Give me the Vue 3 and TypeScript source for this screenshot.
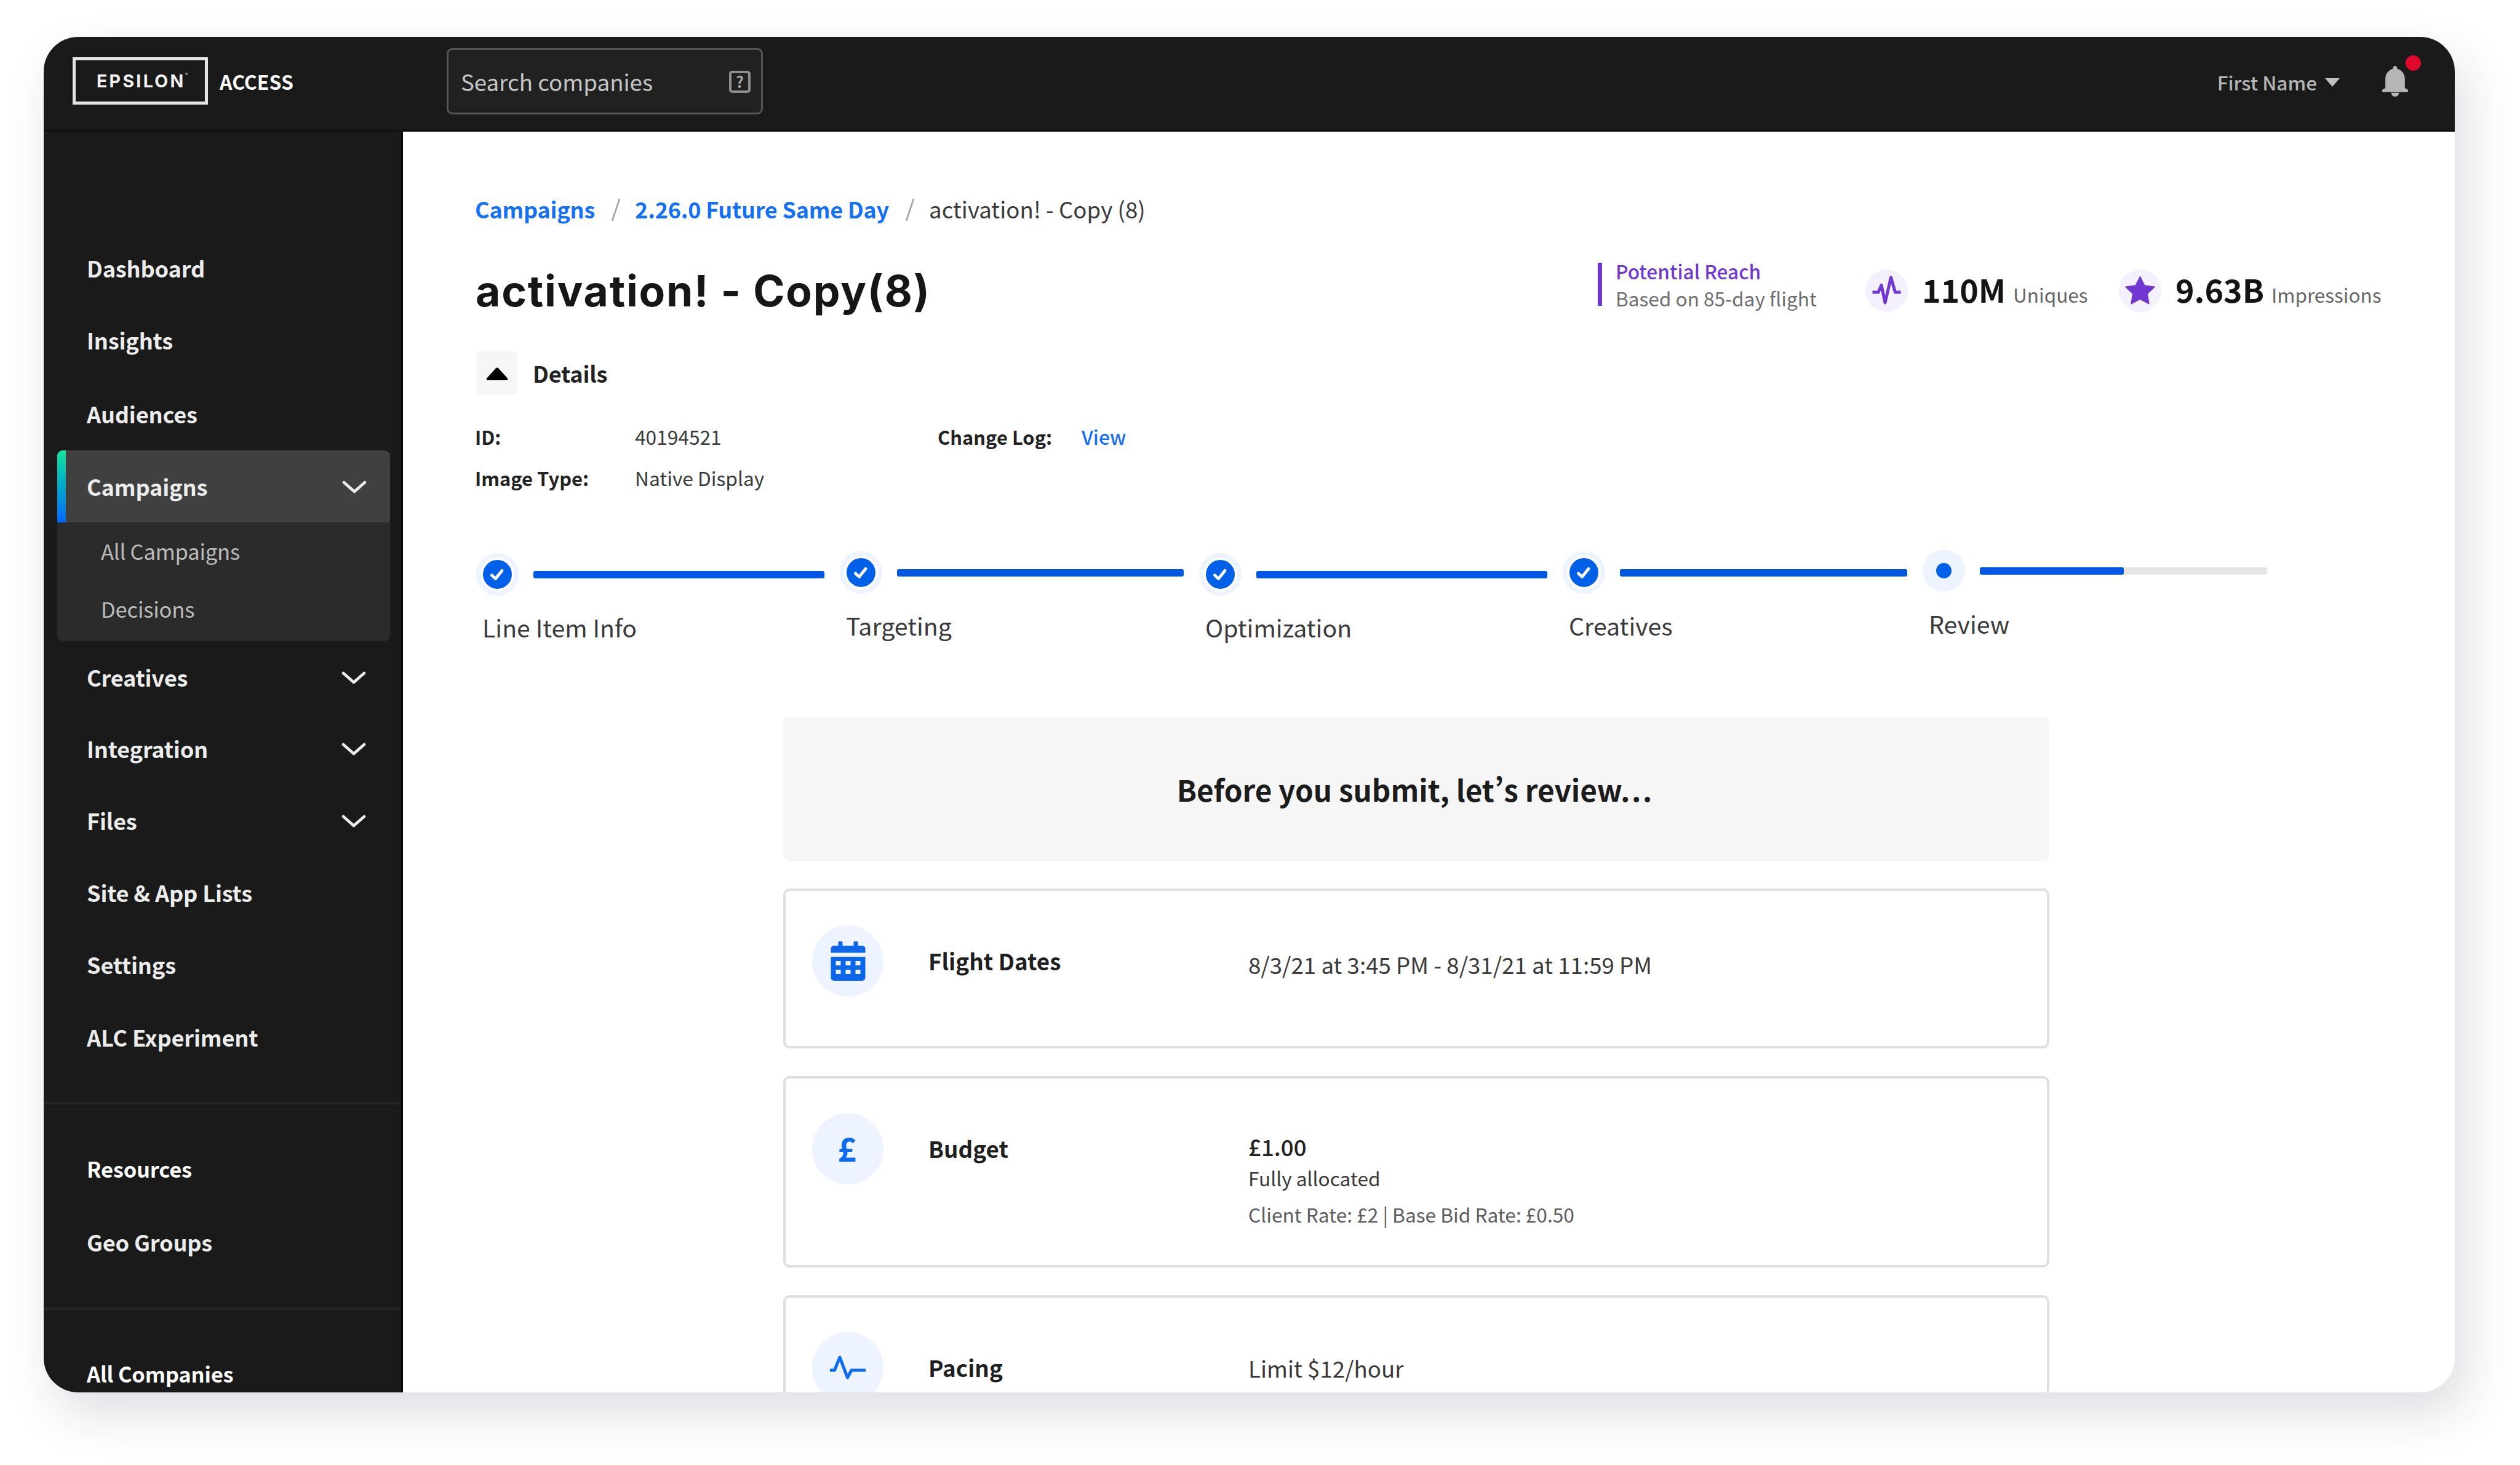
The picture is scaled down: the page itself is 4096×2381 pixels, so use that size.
<script setup lang="ts">
interface NavItem {
  label: string
  height: number
  expandable?: boolean
}

interface Step {
  label: string
  width: number
  offset: number
  state: 'done' | 'current'
}

interface ReviewCard {
  icon: 'calendar' | 'pound' | 'pulse'
  label: string
  height: number
  valueOffset: number
  value: string
  strong?: boolean
  notes: string[]
}

const primaryNav: NavItem[] = [
  { label: 'Dashboard', height: 117 },
  { label: 'Insights', height: 118 },
  { label: 'Audiences', height: 121 },
]

const campaignNav: string[] = ['All Campaigns', 'Decisions']

const secondaryNav: NavItem[] = [
  { label: 'Creatives', height: 115, expandable: true },
  { label: 'Integration', height: 117, expandable: true },
  { label: 'Files', height: 117, expandable: true },
  { label: 'Site & App Lists', height: 117 },
  { label: 'Settings', height: 117 },
  { label: 'ALC Experiment', height: 119 },
]

const steps: Step[] = [
  { label: 'Line Item Info', width: 591, offset: 6, state: 'done' },
  { label: 'Targeting', width: 584, offset: 3, state: 'done' },
  { label: 'Optimization', width: 591, offset: 6, state: 'done' },
  { label: 'Creatives', width: 585, offset: 3, state: 'done' },
  { label: 'Review', width: 585, offset: 0, state: 'current' },
]

const cards: ReviewCard[] = [
  {
    icon: 'calendar',
    label: 'Flight Dates',
    height: 260,
    valueOffset: 39,
    value: '8/3/21 at 3:45 PM - 8/31/21 at 11:59 PM',
    notes: [],
  },
  {
    icon: 'pound',
    label: 'Budget',
    height: 311,
    valueOffset: 30,
    value: '£1.00',
    strong: true,
    notes: ['Fully allocated', 'Client Rate: £2 | Base Bid Rate: £0.50'],
  },
  {
    icon: 'pulse',
    label: 'Pacing',
    height: 260,
    valueOffset: 34,
    value: 'Limit $12/hour',
    notes: [],
  },
]
</script>

<template>
  <div class="page">
    <div class="window">
      <header class="topbar">
        <div class="brand">
          <div class="logo"><span>EPSILON</span><i class="mark"></i></div>
          <span class="product">ACCESS</span>
        </div>
        <div class="search">
          <span>Search companies</span>
          <span class="hint">?</span>
        </div>
        <div class="user">
          <span>First Name</span>
          <svg class="caret" viewBox="0 0 24 14"><path d="M0 0h24L12 14z" /></svg>
        </div>
        <div class="bell">
          <svg viewBox="0 0 44 52">
            <path d="M22 0c2.200 0 3.500 2 3.500 4.600C34 7.500 38.500 14 38.500 22v15.500L43 40c1.500 1 1.300 4.500-1 4.500H2c-2.300 0-2.500-3.500-1-4.500l4.500-2.500V22C5.500 14 10 7.500 18.500 4.600 18.500 2 19.800 0 22 0zM15.500 45.500h13c0 4-3 6.500-6.500 6.500s-6.500-2.500-6.500-6.500z" />
          </svg>
          <i class="dot"></i>
        </div>
      </header>

      <div class="body">
        <nav class="sidebar">
          <div v-for="item in primaryNav" :key="item.label" class="nav-item" :style="{ height: item.height + 'px' }">
            {{ item.label }}
          </div>
          <div class="nav-group">
            <div class="nav-head">
              <span>Campaigns</span>
              <svg class="chevron" viewBox="0 0 40 24"><path d="M3 4l17 15L37 4" /></svg>
            </div>
            <div class="nav-sub">
              <div v-for="label in campaignNav" :key="label" class="sub-item">{{ label }}</div>
            </div>
          </div>
          <div v-for="item in secondaryNav" :key="item.label" class="nav-item" :style="{ height: item.height + 'px' }">
            <span>{{ item.label }}</span>
            <svg v-if="item.expandable" class="chevron" viewBox="0 0 40 24"><path d="M3 4l17 15L37 4" /></svg>
          </div>
          <div class="divider"></div>
          <div class="nav-item heading">Resources</div>
          <div class="nav-item geo">Geo Groups</div>
          <div class="divider"></div>
          <div class="nav-item heading companies">All Companies</div>
        </nav>

        <main class="main">
          <div class="crumbs">
            <a>Campaigns</a>
            <svg class="slash" viewBox="0 0 16 38"><path d="M14 1L2 37" /></svg>
            <a>2.26.0 Future Same Day</a>
            <svg class="slash" viewBox="0 0 16 38"><path d="M14 1L2 37" /></svg>
            <span>activation! - Copy (8)</span>
          </div>

          <div class="title-row">
            <h1>activation! - Copy(8)</h1>
            <div class="stats">
              <div class="reach">
                <i class="bar"></i>
                <div class="reach-text">
                  <b>Potential Reach</b>
                  <span>Based on 85-day flight</span>
                </div>
              </div>
              <div class="metric uniques">
                <span class="badge">
                  <svg viewBox="0 0 48 48"><path d="M1 27h9.500l5-11.500 6 28.500L31 3l7 24h9" fill="none" stroke="#7038d0" stroke-width="5" stroke-linejoin="round" /></svg>
                </span>
                <div class="figure"><b>110M</b><span>Uniques</span></div>
              </div>
              <div class="metric">
                <span class="badge">
                  <svg viewBox="0 0 50 48"><path d="M25 1l7.400 14.800L49 18.200 37 29.700l2.800 16.500L25 38.500l-14.800 7.700L13 29.700 1 18.200l16.600-2.400z" fill="#7038d0" stroke="#7038d0" stroke-width="1.500" stroke-linejoin="round" /></svg>
                </span>
                <div class="figure"><b>9.63B</b><span>Impressions</span></div>
              </div>
            </div>
          </div>

          <div class="details-head">
            <span class="toggle">
              <svg viewBox="0 0 36 22"><path d="M16.200 1.300a2.800 2.800 0 0 1 3.600 0l14.800 16.200c1.500 1.800.6 3.500-1.600 3.500H3c-2.200 0-3.100-1.700-1.600-3.500z" /></svg>
            </span>
            <span>Details</span>
          </div>

          <div class="details">
            <b>ID:</b><span>40194521</span><b>Change Log:</b><a>View</a>
            <b>Image Type:</b><span>Native Display</span>
          </div>

          <div class="stepper">
            <div
              v-for="step in steps"
              :key="step.label"
              class="step"
              :class="step.state"
              :style="{ width: step.width + 'px', paddingTop: step.offset + 'px' }"
            >
              <div class="track">
                <span class="halo">
                  <svg v-if="step.state === 'done'" viewBox="0 0 69 69">
                    <circle cx="34.500" cy="34.500" r="27.500" fill="#fff" />
                    <circle cx="34.500" cy="34.500" r="23.500" fill="#0060e8" />
                    <path d="M25.500 36l6 5.500 10.500-13" fill="none" stroke="#fff" stroke-width="5" stroke-linecap="round" stroke-linejoin="round" />
                  </svg>
                  <svg v-else viewBox="0 0 69 69"><circle cx="34.500" cy="34.500" r="12.500" fill="#0060e8" /></svg>
                </span>
                <span class="line"><i></i></span>
              </div>
              <div class="step-label">{{ step.label }}</div>
            </div>
          </div>

          <section class="review">
            <div class="banner">Before you submit, let’s review…</div>
            <article v-for="card in cards" :key="card.label" class="card" :style="{ height: card.height + 'px' }">
              <span class="card-icon">
                <svg v-if="card.icon === 'calendar'" class="calendar" viewBox="0 0 56 64">
                  <path fill-rule="evenodd" d="M12 1.500A1.500 1.500 0 0 1 13.500 0h4A1.500 1.500 0 0 1 19 1.500V7h18V1.500A1.500 1.500 0 0 1 38.500 0h4A1.500 1.500 0 0 1 44 1.500V7h7a5 5 0 0 1 5 5v6.500H0V12a5 5 0 0 1 5-5h7zM0 25h56v34a5 5 0 0 1-5 5H5a5 5 0 0 1-5-5zM8 32v7h8v-7zM24 32v7h8v-7zM40 32v7h8v-7zM8 46v7h8v-7zM24 46v7h8v-7zM40 46v7h8v-7z" />
                </svg>
                <span v-else-if="card.icon === 'pound'" class="pound">£</span>
                <svg v-else class="pulse" viewBox="0 0 62 42"><path d="M2 25h7.500L18 4l12.500 33 6.500-12h23" /></svg>
              </span>
              <h2>{{ card.label }}</h2>
              <div class="value" :style="{ marginTop: card.valueOffset + 'px' }">
                <p :class="{ strong: card.strong }">{{ card.value }}</p>
                <small v-for="note in card.notes" :key="note">{{ note }}</small>
              </div>
            </article>
          </section>
        </main>
      </div>
    </div>
  </div>
</template>

<style>
html,
body {
  margin: 0;
  background: #fff;
  overflow: hidden;
}
</style>

<style scoped>
* {
  box-sizing: border-box;
}

.page {
  width: 4096px;
  height: 2381px;
  padding: 60px 106px 118px 71px;
  overflow: hidden;
  font-family: 'Noto Sans CJK SC', 'Noto Sans', sans-serif;
  font-size: 36.7px;
  line-height: 48px;
  color: #3a3a3a;
  white-space: nowrap;
}

.window {
  display: flex;
  flex-direction: column;
  height: 2203px;
  border-radius: 56px;
  overflow: hidden;
  background: #fff;
  box-shadow: 18px 34px 80px rgba(32, 34, 72, 0.15);
}

.topbar {
  display: flex;
  align-items: center;
  flex: none;
  height: 154px;
  padding: 0 75px 8px 47px;
  background: #1a1a1a;
  border-bottom: 3px solid #101010;
}

.brand {
  display: flex;
  align-items: center;
  gap: 19px;
  width: 608px;
}

.logo {
  display: flex;
  width: 220px;
  height: 77px;
  padding-left: 34px;
  align-items: center;
  border: 5px solid #e4e4e4;
  color: #f2f2f2;
  font: 700 28.5px/60px Inter, sans-serif;
  letter-spacing: 3.3px;
}

.mark {
  width: 4px;
  height: 4px;
  margin: -24px 0 0 -1px;
  border-radius: 50%;
  background: #8a8a8a;
}

.product {
  color: #fff;
  font-size: 32px;
  font-weight: 700;
}

.search {
  display: flex;
  align-items: center;
  justify-content: space-between;
  width: 514px;
  height: 108px;
  padding: 0 17px 0 20px;
  border: 3px solid #555;
  border-radius: 9px;
  background: #212121;
  color: #c6c6c6;
}

.hint {
  width: 35px;
  height: 36px;
  margin-top: 2px;
  border: 4px solid #8f8f8f;
  border-radius: 5px;
  color: #a8a8a8;
  font-size: 25px;
  font-weight: 700;
  line-height: 27px;
  text-align: center;
}

.user {
  display: flex;
  align-items: center;
  gap: 13px;
  margin-left: auto;
  padding-top: 2px;
  color: #b6b6b6;
  font-size: 31.5px;
  font-weight: 500;
}

.caret {
  width: 24px;
  height: 14px;
  margin-top: 3px;
  fill: #c0c0c0;
}

.bell {
  position: relative;
  width: 44px;
  height: 50px;
  margin-left: 68px;
}

.bell svg {
  display: block;
  width: 44px;
  height: 50px;
  fill: #b5b5b5;
}

.dot {
  position: absolute;
  top: -17px;
  right: -20px;
  width: 25px;
  height: 25px;
  border-radius: 50%;
  background: #e00a2e;
}

.body {
  display: flex;
  flex: 1;
  min-height: 0;
}

.sidebar {
  flex: none;
  width: 584px;
  padding-top: 162px;
  overflow: hidden;
  background: #1a1a1a;
  border-right: 3px solid #060606;
  color: #ececec;
  font-size: 36.2px;
  font-weight: 700;
  letter-spacing: -0.2px;
}

.nav-item {
  display: flex;
  align-items: center;
  justify-content: space-between;
  padding: 0 57px 0 70px;
}

.nav-group {
  width: 541px;
  margin-left: 22px;
  border-radius: 9px;
  overflow: hidden;
  background: #2b2b2b;
}

.nav-head {
  display: flex;
  align-items: center;
  justify-content: space-between;
  height: 117px;
  padding: 0 38px 1px 48px;
  background: linear-gradient(#12e59c, #00a3d0 55%, #0068ff) left / 14px 100% no-repeat, #404040;
}

.nav-sub {
  height: 193px;
}

.sub-item {
  height: 94px;
  padding-left: 71px;
  color: #bcbcbc;
  font-size: 34.6px;
  font-weight: 400;
  line-height: 93px;
}

.chevron {
  width: 40px;
  height: 24px;
  margin-top: 4px;
  fill: none;
  stroke: #ededed;
  stroke-width: 4.600;
  stroke-linecap: round;
  stroke-linejoin: round;
}

.divider {
  height: 4px;
  margin: 47px 0 45px;
  background: #262626;
}

.heading {
  height: 117px;
  color: #fff;
  font-size: 34.5px;
}

.companies {
  height: 115px;
}

.geo {
  height: 121px;
}

.main {
  flex: 1;
  padding: 101px 0 0 117px;
  overflow: hidden;
}

.crumbs {
  display: flex;
  align-items: center;
}

.crumbs a {
  color: #1470f5;
  font-size: 36px;
  font-weight: 700;
  letter-spacing: -0.2px;
}

.slash {
  width: 16px;
  height: 38px;
  margin: 3px 23px 0 26px;
  fill: none;
  stroke: #a4a4a4;
  stroke-width: 2.600;
}

.title-row {
  display: flex;
  align-items: center;
  height: 84px;
  margin-top: 67px;
}

h1 {
  margin: 1px 0 0 1px;
  color: #161616;
  font: 700 69.5px/84px Inter, sans-serif;
  letter-spacing: 1.8px;
}

.stats {
  display: flex;
  align-items: center;
  flex: none;
  width: 1393px;
  height: 84px;
  margin-left: auto;
}

.reach {
  display: flex;
  flex: none;
  align-items: center;
  width: 435px;
  padding-bottom: 20px;
}

.bar {
  width: 7px;
  height: 70px;
  margin-right: 22px;
  background: #7038d0;
}

.reach-text {
  display: flex;
  flex-direction: column;
  color: #6e6e6e;
  font-size: 31.6px;
  line-height: 44px;
}

.reach-text b {
  color: #7038d0;
  font-weight: 500;
}

.metric {
  display: flex;
  flex: none;
  align-items: center;
}

.uniques {
  width: 412px;
}

.badge {
  display: flex;
  flex: none;
  align-items: center;
  justify-content: center;
  width: 69px;
  height: 69px;
  margin-right: 23px;
  border-radius: 50%;
  background: #f4f0fd;
}

.badge svg {
  width: 49px;
  height: 48px;
}

.figure {
  display: flex;
  align-items: baseline;
  gap: 12px;
  margin-top: -5px;
  color: #666;
  font-size: 31.5px;
  line-height: 40px;
}

.figure b {
  color: #141414;
  font-size: 51.9px;
  line-height: 84px;
}

.details-head {
  display: flex;
  align-items: center;
  height: 70px;
  margin: 57px 0 0 2px;
  gap: 24px;
  color: #222;
  font-size: 36.2px;
  font-weight: 700;
  letter-spacing: -0.2px;
}

.toggle {
  display: flex;
  align-items: center;
  justify-content: center;
  width: 68px;
  height: 70px;
  border-radius: 8px;
  background: #f6f6f6;
}

.toggle svg {
  width: 36px;
  height: 22px;
  margin-top: 3px;
}

.details {
  display: grid;
  grid-template-columns: 260px 492px 234px auto;
  grid-auto-rows: 67px;
  margin-top: 35px;
  font-size: 31.7px;
  line-height: 67px;
}

.details b {
  color: #222;
  font-size: 30.9px;
}

.details a {
  color: #1470f5;
  font-weight: 500;
}

.stepper {
  display: flex;
  height: 152px;
  margin: 83px 0 0 2px;
}

.step {
  flex: none;
}

.track {
  display: flex;
  align-items: center;
}

.halo {
  flex: none;
  width: 69px;
  height: 69px;
  border-radius: 50%;
  background: #edf4ff;
}

.halo svg {
  display: block;
}

.line {
  flex: 1;
  height: 12px;
  margin: 0 25px 0 24px;
  border-radius: 3px;
  overflow: hidden;
  background: #e5e5e5;
}

.line i {
  display: block;
  width: 100%;
  height: 12px;
  background: #0057e3;
}

.current .line i {
  width: 50%;
  border-radius: 0 3px 3px 0;
}

.step-label {
  margin: 26px 0 0 10px;
  font-size: 39.3px;
  line-height: 50px;
}

.review {
  display: flex;
  flex-direction: column;
  gap: 45px;
  width: 2058px;
  margin: 121px 0 0 501px;
}

.banner {
  height: 233px;
  padding-right: 6px;
  border-radius: 9px;
  background: #f6f6f6;
  color: #1c1c1c;
  font-size: 47.6px;
  font-weight: 700;
  line-height: 233px;
  text-align: center;
  /* Proportional quotes instead of the CJK face's full-width ones. */
  font-feature-settings: 'pwid';
}

.card {
  display: flex;
  align-items: flex-start;
  flex: none;
  padding: 56px 0 0 43px;
  border: 4px solid #e0e0e0;
  border-radius: 10px;
}

.card-icon {
  display: flex;
  align-items: center;
  justify-content: center;
  width: 116px;
  height: 116px;
  border-radius: 50%;
  background: #edf4ff;
}

.calendar {
  width: 57px;
  height: 64px;
  fill: #0c66ea;
}

.pound {
  margin: -5px 2px 0 0;
  color: #0c6cf0;
  font-size: 53px;
  font-weight: 700;
}

.pulse {
  width: 62px;
  height: 42px;
  fill: none;
  stroke: #0c6cf0;
  stroke-width: 5;
  stroke-linejoin: round;
}

h2 {
  width: 520px;
  margin: 0 0 0 73px;
  color: #1f1f1f;
  font-size: 36.8px;
  line-height: 115px;
}

.value {
  display: flex;
  flex-direction: column;
}

.value p {
  margin: 0;
}

.value .strong {
  color: #222;
  font-weight: 500;
}

.value small {
  margin-top: 5px;
  font-size: 31.7px;
  line-height: 44px;
}

.value small + small {
  margin-top: 15px;
  color: #5c5c5c;
}
</style>
